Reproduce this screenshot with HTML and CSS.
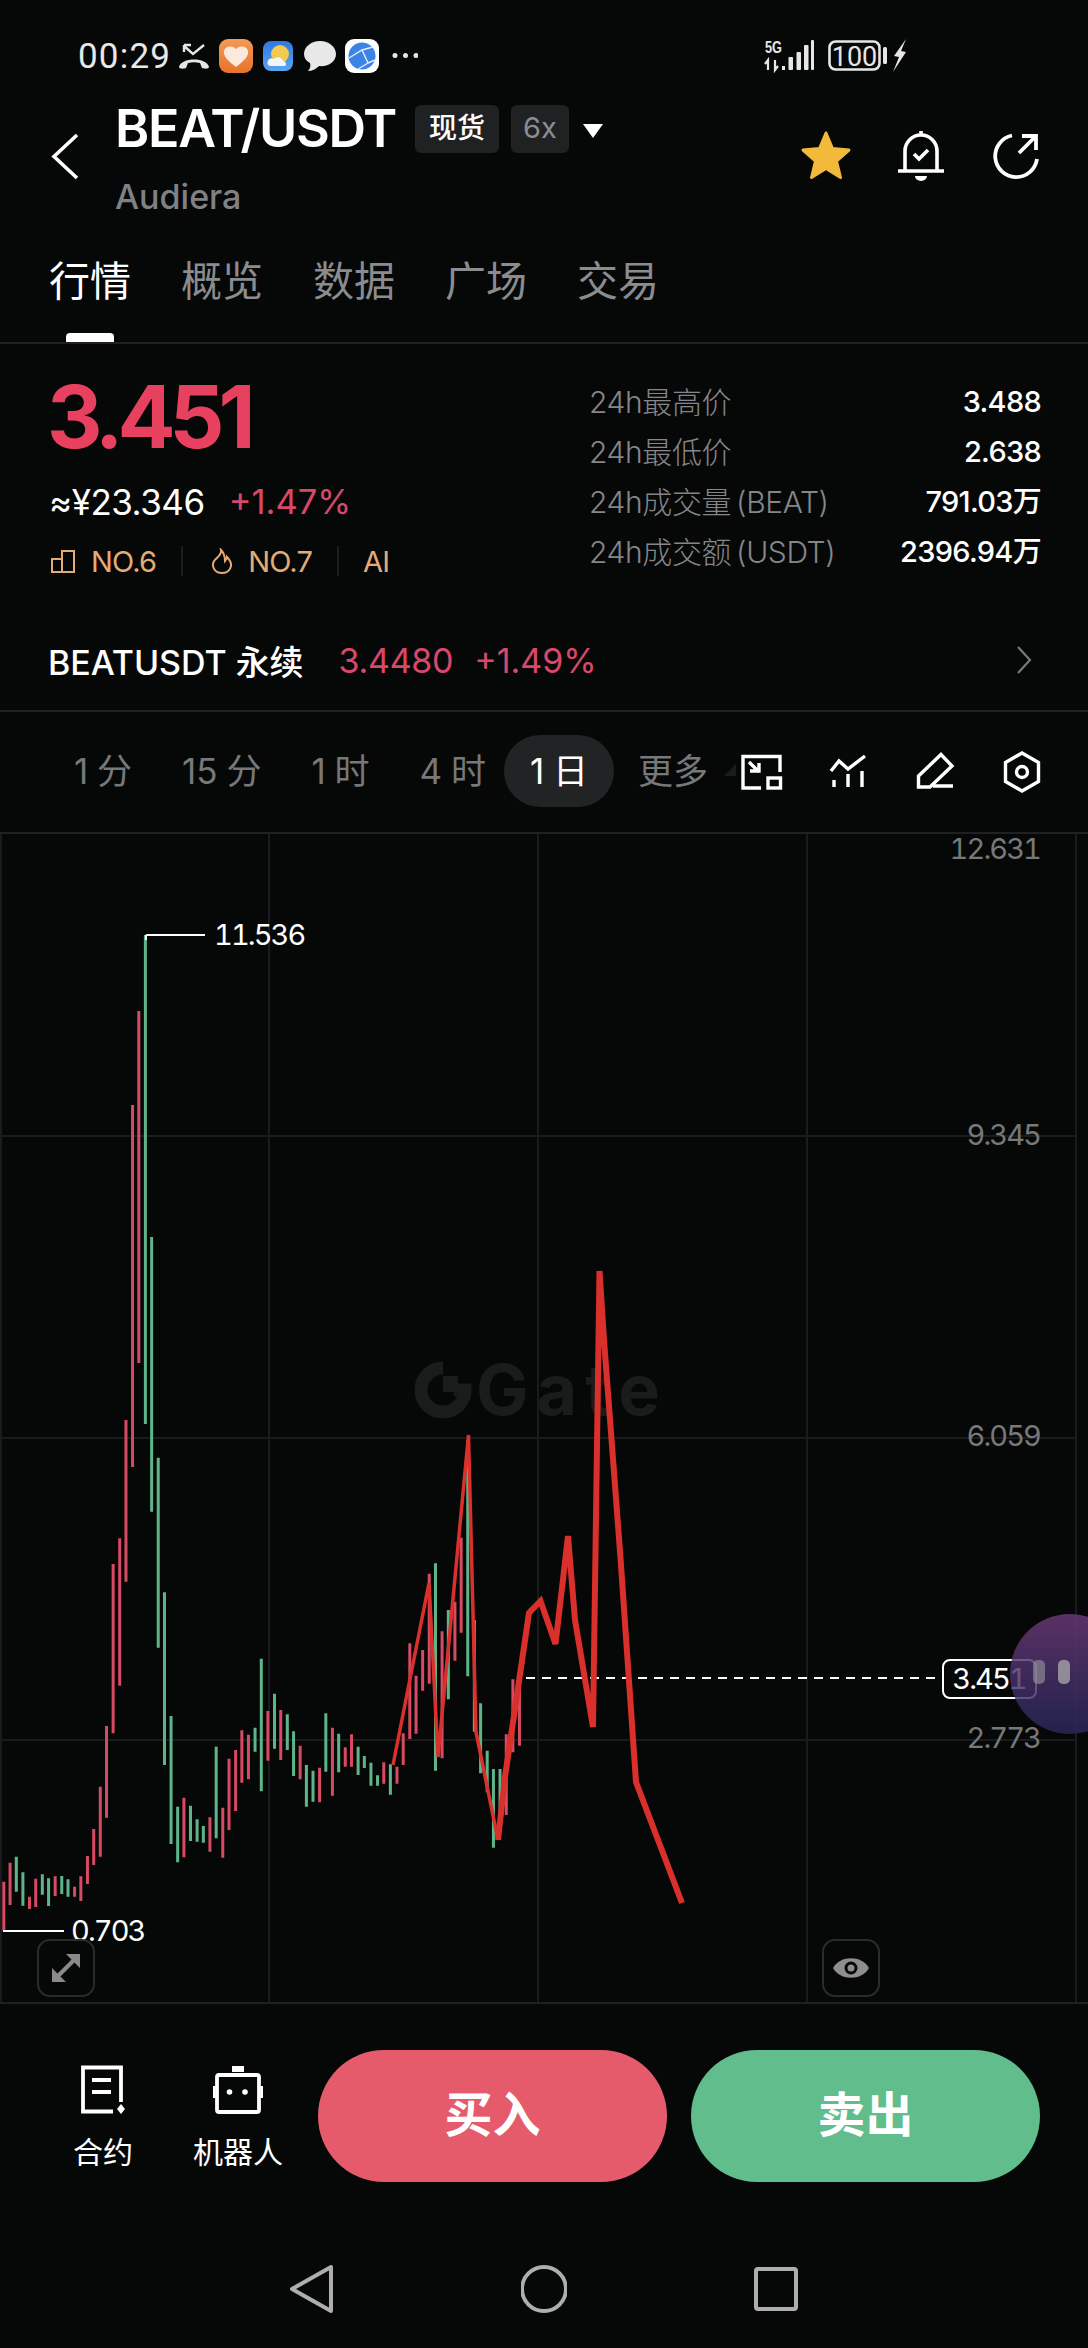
FILE: index.html
```html
<!DOCTYPE html>
<html lang="zh">
<head>
<meta charset="utf-8">
<title>BEAT/USDT</title>
<link rel="stylesheet" href="styles.css">
</head>
<body>
<div class="page">
  <div class="status">
    <span class="time">00:29</span>
    <svg class="status-icons" width="240" height="54" viewBox="178 30 240 54">
      <defs>
        <linearGradient id="org" x1="0" y1="0" x2="0" y2="1"><stop offset="0" stop-color="#f29a55"/><stop offset="1" stop-color="#e8732c"/></linearGradient>
        <linearGradient id="wea" x1="0" y1="0" x2="0" y2="1"><stop offset="0" stop-color="#2f78e2"/><stop offset="1" stop-color="#5aa5f0"/></linearGradient>
      </defs>
      <path d="M184 46 L193 54 L204 45 M184 45 V52 M184 45 H191" fill="none" stroke="#e6e6e6" stroke-width="2.4"/>
      <path d="M179 67 C181 57 207 57 209 67 C209 69 204 69 202 68 L200 63 C196 62 192 62 188 63 L186 68 C184 69 179 69 179 67Z" fill="#e6e6e6"/>
      <rect x="219" y="39" width="34" height="34" rx="9" fill="url(#org)"/>
      <path d="M236 67 C228 61 223 56 224 51 C225 46 232 45 236 49 C240 45 247 46 248 51 C249 56 244 61 236 67Z" fill="#fbe9dc"/>
      <rect x="263" y="41" width="30" height="30" rx="8" fill="url(#wea)"/>
      <circle cx="280" cy="54" r="9" fill="#f3c94e"/>
      <path d="M268 65 C266 60 271 57 274 59 C276 56 282 57 283 61 C286 61 287 65 285 66 H270Z" fill="#f2f5f7"/>
      <path d="M320 41 C329 41 336 47 336 54 C336 62 328 67 319 66 C316 69 312 71 308 71 C310 69 311 66 310 63 C306 61 304 58 304 54 C304 47 311 41 320 41Z" fill="#e8e8e8"/>
      <rect x="345" y="39" width="34" height="34" rx="9" fill="#fff"/>
      <circle cx="362" cy="56" r="13.5" fill="#3c83e6"/>
      <path d="M349 58 L362 50 L373 47 M362 50 L368 63 L358 69 M368 63 L375 60" fill="none" stroke="#e4eefb" stroke-width="1.4"/>
      <circle cx="395" cy="55.500" r="2.500" fill="#e6e6e6"/><circle cx="405.500" cy="55.500" r="2.500" fill="#e6e6e6"/><circle cx="416" cy="55.500" r="2.500" fill="#e6e6e6"/>
    </svg>
    <svg class="status-right" width="150" height="54" viewBox="760 30 150 54">
      <text class="net" x="765" y="53" textLength="17" lengthAdjust="spacingAndGlyphs">5G</text>
      <path d="M768 70 V60 L765 64 M775 60 V70 L778 66" fill="none" stroke="#e6e6e6" stroke-width="2.200"/>
      <rect x="782" y="66" width="3" height="4" fill="#e6e6e6"/>
      <rect x="788.500" y="57" width="4.500" height="13" rx="1" fill="#e6e6e6"/>
      <rect x="796.500" y="52" width="4.500" height="18" rx="1" fill="#e6e6e6"/>
      <rect x="804" y="45" width="4.500" height="25" rx="1" fill="#e6e6e6"/>
      <rect x="811" y="40" width="3" height="30" rx="1" fill="#e6e6e6"/>
      <rect x="829.500" y="41.500" width="50" height="28" rx="6" fill="none" stroke="#e6e6e6" stroke-width="2.600"/>
      <text class="batt" x="854.500" y="66" text-anchor="middle">100</text>
      <rect x="883" y="47" width="4" height="17" rx="1.500" fill="#e6e6e6"/>
      <path d="M906 39 L894 56 L899 57 L893 72 L906 52 L901 51Z" fill="#e6e6e6"/>
    </svg>
  </div>

  <header class="head">
    <svg class="back" width="30" height="50" viewBox="0 0 30 50"><path d="M26 3 L3 24.500 L26 46" fill="none" stroke="#fff" stroke-width="3.600"/></svg>
    <div class="titles">
      <div class="title-row">
        <span class="pair">BEAT/USDT</span>
        <span class="badge">现货</span>
        <span class="badge badge-dim">6x</span>
        <span class="caret"></span>
      </div>
      <div class="coin">Audiera</div>
    </div>
    <div class="head-icons">
      <svg width="54" height="52" viewBox="0 0 54 52"><path d="M27 3 L33.500 18.500 L50 20 L37.500 31 L41.500 47.500 L27 38.500 L12.500 47.500 L16.500 31 L4 20 L20.500 18.500Z" fill="#f2b93b" stroke="#f2b93b" stroke-width="3" stroke-linejoin="round"/></svg>
      <svg width="48" height="52" viewBox="0 0 48 52"><path d="M8 40 V21 a16 16 0 0 1 32 0 V40" fill="none" stroke="#fff" stroke-width="3.600"/><path d="M1 41 H47 M24 1 V6" fill="none" stroke="#fff" stroke-width="3.600"/><path d="M17 24 L22 29 L31 20" fill="none" stroke="#fff" stroke-width="3.600"/><path d="M18 46 H30 a6 5 0 0 1 -12 0Z" fill="#fff"/></svg>
      <svg width="48" height="48" viewBox="0 0 48 48"><path d="M20 3.500 A21 21 0 1 0 45 27" fill="none" stroke="#fff" stroke-width="3.800"/><path d="M27 21 L44 4 M30 4 H44 V18" fill="none" stroke="#fff" stroke-width="3.800"/></svg>
    </div>
  </header>

  <nav class="tabs">
    <span class="tab tab-on">行情</span>
    <span class="tab">概览</span>
    <span class="tab">数据</span>
    <span class="tab">广场</span>
    <span class="tab">交易</span>
  </nav>

  <section class="stats">
    <div class="left">
      <div class="price">3.451</div>
      <div class="sub"><span class="cny">≈¥23.346</span><span class="chg">+1.47%</span></div>
      <div class="ranks">
        <svg width="26" height="26" viewBox="0 0 26 26"><path d="M2 11 H12 V24 H2Z M12 24 V3 H24 V24 H12" fill="none" stroke="#e5ab74" stroke-width="2"/></svg>
        <span class="rank">NO.6</span>
        <i class="sep"></i>
        <svg width="22" height="26" viewBox="0 0 22 26"><path d="M10 2 C11 7 6 9 3 13 C0 19 4 25 11 25 C18 25 22 19 19 13 C18 11 17 10 16 9 C16 11 15 12 14 13 C14 9 13 5 10 2Z" fill="none" stroke="#e5ab74" stroke-width="2"/></svg>
        <span class="rank">NO.7</span>
        <i class="sep sep-b"></i>
        <span class="rank">AI</span>
      </div>
    </div>
    <dl class="right">
      <div class="row"><dt>24h最高价</dt><dd>3.488</dd></div>
      <div class="row"><dt>24h最低价</dt><dd>2.638</dd></div>
      <div class="row"><dt>24h成交量 (BEAT)</dt><dd>791.03万</dd></div>
      <div class="row"><dt>24h成交额 (USDT)</dt><dd>2396.94万</dd></div>
    </dl>
  </section>

  <section class="perp">
    <span class="perp-name">BEATUSDT 永续</span>
    <span class="perp-price">3.4480</span>
    <span class="perp-chg">+1.49%</span>
    <svg class="perp-arrow" width="16" height="30" viewBox="0 0 16 30"><path d="M2 2 L14 15 L2 28" fill="none" stroke="#77787a" stroke-width="2.200"/></svg>
  </section>

  <section class="frames">
    <span class="frame">1 分</span>
    <span class="frame">15 分</span>
    <span class="frame">1 时</span>
    <span class="frame">4 时</span>
    <span class="frame frame-on">1 日</span>
    <span class="frame frame-more">更多</span>
    <svg class="frame-tools" width="325" height="55" viewBox="720 745 325 55">
      <path d="M724 777 L736 765 V777Z" fill="#1a1b1c"/>
      <g fill="none" stroke="#fff" stroke-width="3.400">
        <path d="M761 789 H743 V757.500 H780 V773"/>
        <rect x="768" y="779" width="12.500" height="10"/>
        <path d="M749 763 L759 773 M750 772 H759 V764"/>
        <path d="M831 772 L839 762 L848 770 L865 757"/>
        <path d="M834 781 V788 M848 775 V788 M862 772 V788"/>
        <path d="M918.500 788 V777 L941 755.500 L952 767 L930 788Z M933 787 H953"/>
        <path d="M1022 754 L1038.500 763.500 V782.500 L1022 792 L1005.500 782.500 V763.500Z"/>
        <circle cx="1022" cy="773" r="5.500"/>
      </g>
    </svg>
  </section>

  <section class="chart">
    <svg class="chart-svg" width="1088" height="1168" viewBox="0 834 1088 1168">
      <defs>
        <linearGradient id="orb" x1="0" y1="0" x2="0" y2="1"><stop offset="0" stop-color="#6c3a78"/><stop offset="1" stop-color="#28285c"/></linearGradient>
      </defs>
      <path class="grid" d="M1 834 V2002 M269 834 V2002 M538 834 V2002 M807 834 V2002 M1076 834 V2002 M0 1136 H1076 M0 1438 H1076 M0 1740 H1076"/>

      <g class="watermark">
        <path d="M443 1368 A22 22 0 1 0 465 1390 H454" fill="none" stroke="#1a1b1b" stroke-width="13"/>
        <rect x="443" y="1376" width="15" height="16" fill="#1a1b1b"/>
        <text class="wm" x="476" y="1415">Gate</text>
      </g>

      <g transform="translate(0 1500) scale(.347 .3333)">
        <path class="cd cd-r" d="M11 1145V1292M29 1088V1215M85 1190V1227M103 1136V1221M159 1129V1188M215 1160V1190M233 1129V1203M252 1068V1152M270 987V1095M289 860V1070M307 678V953M326 192V700M345 115V557M363 -240V245M382 -1185V-99M400 -1467V-411M605 952V1055M530 893V1072M642 923V1073M660 776V990M679 750V933M697 691V848M716 704V838M772 633V782M809 630V780M865 737V838M921 803V907M958 683V887M995 742V800M1013 703V800M1106 787V851M1144 800V851M1162 700V795M1181 430V717M1199 527V701M1218 450V572M1237 221V551M1274 394V775M1311 305V482M1329 113V398M1459 703V945M1478 538V757M1497 564V737"/>
        <path class="cd cd-g" d="M47 1070V1175M66 1117V1217M122 1123V1184M140 1135V1218M178 1128V1182M196 1138V1190M419 -1695V-228M437 -789V35M456 -127V443M474 277V795M493 648V1032M512 920V1087M549 917V1023M568 958V1025M586 978V1028M623 740V1015M735 683V755M753 476V874M791 581V746M828 643V750M846 694V828M883 795V920M902 812V905M939 640V815M976 701V817M1032 740V825M1050 768V804M1069 788V857M1088 826V857M1125 793V884M1255 190V812M1292 330V598M1348 -180V529M1367 360V695M1385 610V820M1404 752V877M1422 807V1043M1441 807V960"/>
      </g>

      <path class="mark" d="M146 935 H205 M146 935 V940 M3 1931 H64"/>
      <text class="val" x="214" y="945">11.536</text>
      <text class="val" x="71" y="1941">0.703</text>

      <text class="axis" x="1040" y="859" text-anchor="end">12.631</text>
      <text class="axis" x="1040" y="1145" text-anchor="end">9.345</text>
      <text class="axis" x="1040" y="1446" text-anchor="end">6.059</text>
      <text class="axis" x="1040" y="1748" text-anchor="end">2.773</text>

      <path class="dash" d="M526 1678 H942"/>

      <path class="scribble" d="M393 1765 L429 1583 L438 1757 L468.500 1435 L476 1732 L498 1840"/>
      <path class="scribble scribble-b" d="M498 1840 L505 1777 L518 1688 L529 1613 L540.500 1601 L555.500 1644 L568 1536 L575 1620 L593 1727 L599.500 1271 L604 1340 L620.500 1558 L636 1782 L682 1903"/>

      <rect class="tag" x="943" y="1660" width="93" height="38" rx="7"/>
      <text class="tag-text" x="989" y="1689" text-anchor="middle">3.451</text>

      <circle cx="1070" cy="1674" r="60" fill="url(#orb)" opacity=".82"/>
      <rect x="1033" y="1660" width="12" height="24" rx="5" fill="#9a9a9e" opacity=".6"/>
      <rect x="1058" y="1660" width="12" height="24" rx="5" fill="#a4a4a8" opacity=".8"/>
    </svg>
    <span class="chart-btn btn-expand">
      <svg width="32" height="32" viewBox="0 0 32 32"><path d="M30 2 H16 L30 16Z M2 30 V16 L16 30Z" fill="#8a8a8a"/><path d="M8 24 L24 8" stroke="#8a8a8a" stroke-width="4"/></svg>
    </span>
    <span class="chart-btn btn-eye">
      <svg width="38" height="24" viewBox="0 0 38 24"><path d="M1 12 C8 -1 30 -1 37 12 C30 25 8 25 1 12Z" fill="#8e8e8e"/><circle cx="19" cy="12" r="6.500" fill="#060808"/><circle cx="19" cy="12" r="3.500" fill="#8e8e8e"/></svg>
    </span>
  </section>

  <footer class="foot">
    <div class="tool">
      <svg width="50" height="52" viewBox="78 2062 50 52"><path d="M121 2100 V2065.500 H83 V2109.500 H113" fill="none" stroke="#fff" stroke-width="3.800"/><path d="M92 2078 H111 M92 2090 H111" stroke="#fff" stroke-width="3.800"/><path d="M121 2102 L125 2107 L121 2112 L117 2107Z" fill="#fff"/></svg>
      <span class="tool-label">合约</span>
    </div>
    <div class="tool">
      <svg width="50" height="52" viewBox="213 2062 50 52"><rect x="217" y="2073" width="42" height="37" rx="2" fill="none" stroke="#fff" stroke-width="3.800"/><path d="M232 2064 H244 V2070 H232Z" fill="#fff"/><path d="M214 2084 V2096 M262 2084 V2096" stroke="#fff" stroke-width="3"/><circle cx="229.500" cy="2090" r="2.800" fill="#fff"/><circle cx="245" cy="2090" r="2.800" fill="#fff"/></svg>
      <span class="tool-label">机器人</span>
    </div>
    <span class="cta cta-buy">买入</span>
    <span class="cta cta-sell">卖出</span>
  </footer>

  <div class="sysnav">
    <svg width="46" height="50" viewBox="0 0 46 50"><path d="M42 3 V47 L3 25Z" fill="none" stroke="#aeaeae" stroke-width="4" stroke-linejoin="round"/></svg>
    <svg width="46" height="50" viewBox="0 0 46 50"><circle cx="23" cy="25" r="22" fill="none" stroke="#aeaeae" stroke-width="4"/></svg>
    <svg width="46" height="50" viewBox="0 0 46 50"><rect x="3" y="5" width="40" height="40" rx="2" fill="none" stroke="#aeaeae" stroke-width="4"/></svg>
  </div>
</div>
</body>
</html>
```

FILE: styles.css
```css
* { box-sizing: border-box; }
html, body { margin: 0; padding: 0; background: #060808; }
body { font-family: Inter, "Noto Sans CJK SC", sans-serif; color: #fff; }
.page { width: 1088px; height: 2348px; overflow: hidden; display: flex; flex-direction: column; background: #060808; }

/* status bar */
.status { height: 84px; padding: 30px 0 0 78px; display: flex; align-items: center; }
.time { width: 100px; font-family: Roboto, sans-serif; font-size: 35px; letter-spacing: 1.200px; color: #e8e8e8; line-height: 54px; white-space: nowrap; }
.status-icons { display: block; }
.status-right { display: block; margin-left: 342px; }
.net { font: 700 16px "Liberation Sans", sans-serif; fill: #e6e6e6; }
.batt { font: 400 27px Roboto, sans-serif; fill: #e6e6e6; }

/* header */
.head { height: 144px; padding: 0 48px 0 51px; display: flex; position: relative; }
.back { margin-top: 48px; flex: none; }
.titles { margin-left: 34px; padding-top: 16px; }
.title-row { display: flex; align-items: center; height: 58px; }
.pair { font-size: 52px; font-weight: 600; letter-spacing: -1.300px; line-height: 58px; }
.badge { margin-left: 19px; height: 48px; padding: 0 14px; background: #202122; border-radius: 6px; font-size: 28px; line-height: 46px; font-weight: 500; }
.badge + .badge { margin-left: 12px; }
.badge-dim { color: #8b8c8f; padding: 0 12px; font-size: 29px; font-weight: 400; }
.caret { margin: 4px 0 0 14px; width: 0; height: 0; border-left: 10px solid transparent; border-right: 10px solid transparent; border-top: 14px solid #fff; }
.coin { margin-top: 17px; font-size: 34px; line-height: 44px; color: #808184; font-weight: 500; }
.head-icons { margin-left: auto; display: flex; align-items: center; gap: 44px; padding-top: 42px; height: 102px; }
.head-icons svg:first-child { margin-left: -3px; }
.head-icons svg:last-child { margin-left: 3px; }

/* tabs */
.tabs { height: 116px; padding: 8px 0 0 49px; display: flex; gap: 50px; border-bottom: 2px solid #1f2021; }
.tab { position: relative; width: 82px; font-size: 41px; line-height: 90px; color: #8b8c8f; height: 90px; }
.tab-on { color: #fff; }
.tab-on::after { content: ""; position: absolute; left: 17px; right: 17px; top: 97px; height: 9px; border-radius: 4px 4px 0 0; background: #fff; }

/* stats */
.stats { height: 268px; padding: 0 47px 0 47px; display: flex; justify-content: space-between; }
.price { margin-top: 28px; font-size: 86px; font-weight: 700; letter-spacing: -6px; line-height: 90px; color: #e8405f; }
.sub { margin-top: 20px; display: flex; line-height: 40px; font-size: 35px; }
.cny { color: #fff; letter-spacing: -.5px; margin-left: 2px; }
.chg { margin-left: 24px; color: #d9486a; font-size: 34.500px; }
.ranks { margin-top: 19px; margin-left: 3px; display: flex; align-items: center; height: 40px; }
.rank { font-size: 29px; color: #e5ab74; letter-spacing: -.8px; margin-left: 15px; }
.rank:last-child { margin-left: 24px; }
.sep { width: 2px; height: 30px; background: #1c1d1e; margin: 0 28px 0 25px; }
.sep-b { margin: 0 0 0 25px; }
.right { margin: 0; padding-top: 33px; width: 452px; }
.row { display: flex; justify-content: space-between; line-height: 50px; height: 50px; font-size: 30px; }
dt { color: #85868a; font-weight: 300; letter-spacing: -.4px; word-spacing: -3px; }
dd { margin: 0; color: #fff; font-weight: 500; font-size: 29px; letter-spacing: -.7px; }

/* perpetual row */
.perp { height: 100px; padding: 0 56px 2px 48px; display: flex; align-items: center; border-bottom: 2px solid #1f2021; font-size: 34px; }
.perp-name { font-weight: 500; letter-spacing: -.05px; }
.perp-price { margin-left: 35px; color: #d9486a; letter-spacing: -.3px; }
.perp-chg { margin-left: 21px; color: #d9486a; }
.perp-arrow { margin-left: auto; }

/* time frames */
.frames { height: 122px; padding: 0 43px 2px 49px; display: flex; align-items: center; border-bottom: 2px solid #1f2021; font-size: 35px; color: #77787a; }
.frame { padding: 0 25px; line-height: 72px; height: 72px; white-space: nowrap; word-spacing: -1px; flex: none; }
.frame-on { padding: 0 26px; margin-left: -7px; background: #222324; border-radius: 36px; color: #fff; }
.frame-more { padding: 0 0 0 24px; }
.frame-tools { margin-left: auto; flex: none; display: block; }

/* chart */
.chart { position: relative; height: 1168px; }
.chart-svg { display: block; overflow: visible; }
.grid { fill: none; stroke: #1a1b1c; stroke-width: 2; }
.cd { fill: none; stroke-width: 3; vector-effect: non-scaling-stroke; }
.cd-r { stroke: #d84a62; }
.cd-g { stroke: #5fb58a; }
.wm { font: 700 70px Inter, sans-serif; fill: #1a1b1b; letter-spacing: 8px; }
.mark { fill: none; stroke: #fff; stroke-width: 2; }
.val, .axis, .tag-text { font: 400 29px Inter, sans-serif; font-feature-settings: "tnum"; letter-spacing: -1.900px; }
.val { fill: #fff; }
.axis { fill: #77787a; }
.dash { stroke: #fff; stroke-width: 2; stroke-dasharray: 9 7; fill: none; }
.scribble { fill: none; stroke: #d9302c; stroke-width: 3.500; stroke-linejoin: miter; }
.scribble-b { stroke-width: 6; }
.tag { fill: #060808; stroke: #fff; stroke-width: 2; }
.tag-text { fill: #fff; }
.chart-btn { position: absolute; top: 1105px; width: 58px; height: 58px; display: flex; align-items: center; justify-content: center; border: 2px solid #2a2b2c; border-radius: 13px; }
.btn-expand { left: 37px; }
.btn-eye { left: 822px; }

/* footer */
.foot { height: 233px; border-top: 2px solid #1f2021; padding: 46px 48px 0 58px; display: flex; align-items: flex-start; }
.tool { width: 90px; display: flex; flex-direction: column; align-items: center; padding-top: 14px; }
.tool + .tool { margin-left: 45px; }
.tool svg { display: block; }
.tool-label { margin-top: 20px; font-size: 30px; line-height: 32px; white-space: nowrap; }
.cta { width: 349px; height: 132px; border-radius: 66px; font-size: 48px; font-weight: 700; line-height: 130px; text-align: center; }
.cta-buy { margin-left: 35px; background: #e65b6c; }
.cta-sell { margin-left: 24px; background: #62bd8c; }

/* system navigation */
.sysnav { height: 113px; padding-top: 29px; display: flex; justify-content: center; gap: 186px; }
.sysnav svg { display: block; }
```
